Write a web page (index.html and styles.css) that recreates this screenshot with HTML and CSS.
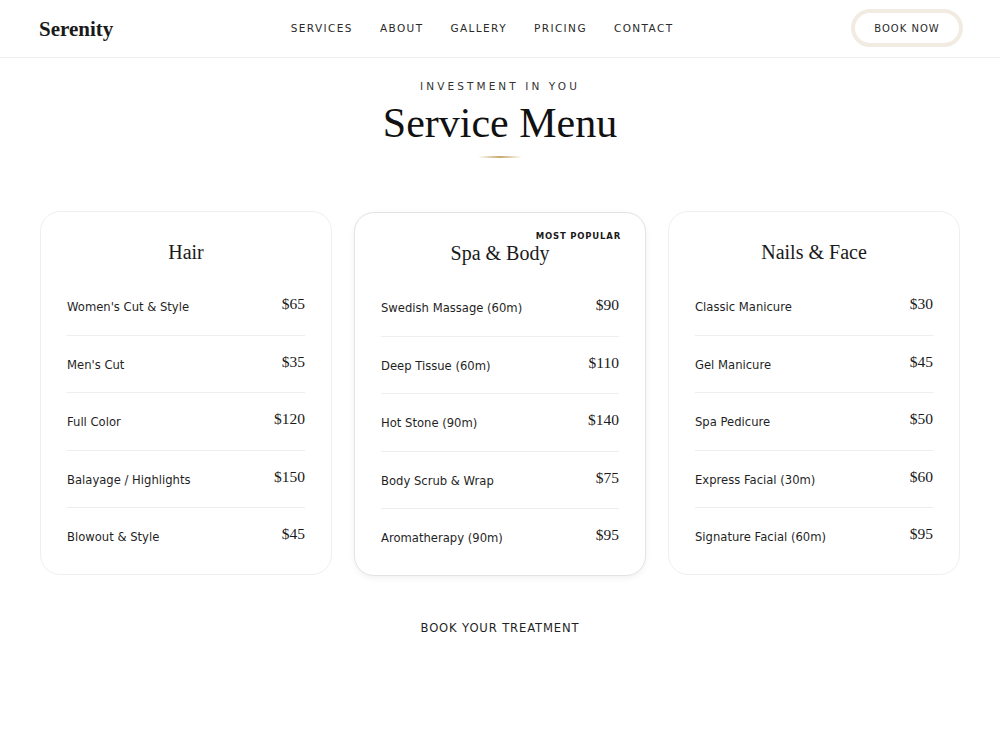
FILE: index.html
```html
<!DOCTYPE html>
<html lang="en">
<head>
<meta charset="utf-8">
<title>Serenity</title>
<link rel="stylesheet" href="styles.css">
</head>
<body>
<header class="site-header">
  <div class="logo">Serenity</div>
  <nav class="nav">
    <a href="#">SERVICES</a>
    <a href="#">ABOUT</a>
    <a href="#">GALLERY</a>
    <a href="#">PRICING</a>
    <a href="#">CONTACT</a>
  </nav>
  <a class="book-btn" href="#">BOOK NOW</a>
</header>

<main class="menu">
  <div class="eyebrow">INVESTMENT IN YOU</div>
  <h1 class="title">Service Menu</h1>
  <div class="divider"></div>

  <div class="cards">
    <section class="card">
      <h2 class="card-title">Hair</h2>
      <ul class="items">
        <li class="item"><span class="name">Women's Cut &amp; Style</span><span class="price">$65</span></li>
        <li class="item"><span class="name">Men's Cut</span><span class="price">$35</span></li>
        <li class="item"><span class="name">Full Color</span><span class="price">$120</span></li>
        <li class="item"><span class="name">Balayage / Highlights</span><span class="price">$150</span></li>
        <li class="item"><span class="name">Blowout &amp; Style</span><span class="price">$45</span></li>
      </ul>
    </section>
    <section class="card card-featured">
      <span class="badge">MOST POPULAR</span>
      <h2 class="card-title">Spa &amp; Body</h2>
      <ul class="items">
        <li class="item"><span class="name">Swedish Massage (60m)</span><span class="price">$90</span></li>
        <li class="item"><span class="name">Deep Tissue (60m)</span><span class="price">$110</span></li>
        <li class="item"><span class="name">Hot Stone (90m)</span><span class="price">$140</span></li>
        <li class="item"><span class="name">Body Scrub &amp; Wrap</span><span class="price">$75</span></li>
        <li class="item"><span class="name">Aromatherapy (90m)</span><span class="price">$95</span></li>
      </ul>
    </section>
    <section class="card">
      <h2 class="card-title">Nails &amp; Face</h2>
      <ul class="items">
        <li class="item"><span class="name">Classic Manicure</span><span class="price">$30</span></li>
        <li class="item"><span class="name">Gel Manicure</span><span class="price">$45</span></li>
        <li class="item"><span class="name">Spa Pedicure</span><span class="price">$50</span></li>
        <li class="item"><span class="name">Express Facial (30m)</span><span class="price">$60</span></li>
        <li class="item"><span class="name">Signature Facial (60m)</span><span class="price">$95</span></li>
      </ul>
    </section>
  </div>

  <div class="cta-wrap"><a class="cta" href="#">BOOK YOUR TREATMENT</a></div>
</main>
</body>
</html>
```

FILE: styles.css
```css
* { box-sizing: border-box; }

body {
  margin: 0;
  background: #fff;
  color: #1a1a1a;
  font-family: "DejaVu Sans", sans-serif;
}

a { color: inherit; text-decoration: none; }

.site-header {
  height: 58px;
  display: flex;
  align-items: center;
  justify-content: space-between;
  padding: 0 37px 0 39px;
  border-bottom: 1px solid #eeeeee;
}

.logo {
  font-family: "Liberation Serif", serif;
  font-weight: 700;
  font-size: 21px;
  color: #1a1a1a;
  padding-top: 1px;
}

.nav {
  display: flex;
  gap: 27px;
  font-size: 10.5px;
  letter-spacing: 1.4px;
  color: #2a2a2a;
  margin-top: -2px;
}

.book-btn {
  width: 112px;
  height: 38px;
  border: 4px solid #f2ebe2;
  border-radius: 20px;
  display: flex;
  align-items: center;
  justify-content: center;
  font-size: 10px;
  letter-spacing: 1px;
  color: #2a2a2a;
  margin-top: -1px;
}

.menu {
  padding: 0 40px;
  text-align: center;
}

.eyebrow {
  margin-top: 21px;
  font-size: 10.5px;
  letter-spacing: 3.1px;
  color: #333;
  line-height: 14px;
}

.title {
  margin: 5px 0 0;
  font-family: "Liberation Serif", serif;
  font-weight: 400;
  font-size: 42px;
  line-height: 50px;
  color: #111;
}

.divider {
  width: 44px;
  height: 2px;
  margin: 8px auto 0;
  background: linear-gradient(90deg, rgba(201,169,110,0), #c9a96e 50%, rgba(201,169,110,0));
}

.cards {
  margin-top: 53px;
  display: grid;
  grid-template-columns: repeat(3, 1fr);
  gap: 22px;
  text-align: left;
  align-items: start;
}

.card {
  position: relative;
  border: 1px solid #efefef;
  border-radius: 20px;
  padding: 27px 26px 9px;
  background: #fff;
}

.card-featured {
  border-color: #e3e3e3;
  box-shadow: 0 2px 6px rgba(0,0,0,0.06);
  margin-top: 1px;
}

.badge {
  position: absolute;
  top: 18px;
  right: 24px;
  font-size: 8.5px;
  font-weight: 700;
  letter-spacing: 0.8px;
  color: #1a1a1a;
}

.card-title {
  margin: 0 0 13px;
  text-align: center;
  font-family: "Liberation Serif", serif;
  font-weight: 400;
  font-size: 20px;
  line-height: 26px;
  color: #1a1a1a;
}

.items {
  list-style: none;
  margin: 0;
  padding: 0;
}

.item {
  display: flex;
  justify-content: space-between;
  align-items: baseline;
  padding: 17px 0 17.5px;
  border-bottom: 1px solid #eeeeee;
}

.item:last-child { border-bottom: none; }

.name {
  font-size: 11.6px;
  color: #1f1f1f;
}

.price {
  font-family: "Liberation Serif", serif;
  font-size: 15.5px;
  line-height: 22px;
  color: #1a1a1a;
  position: relative;
  top: -2px;
}

.cta-wrap {
  margin-top: 41px;
}

.cta {
  font-size: 11.6px;
  letter-spacing: 0.85px;
  color: #1f1f1f;
}
```
